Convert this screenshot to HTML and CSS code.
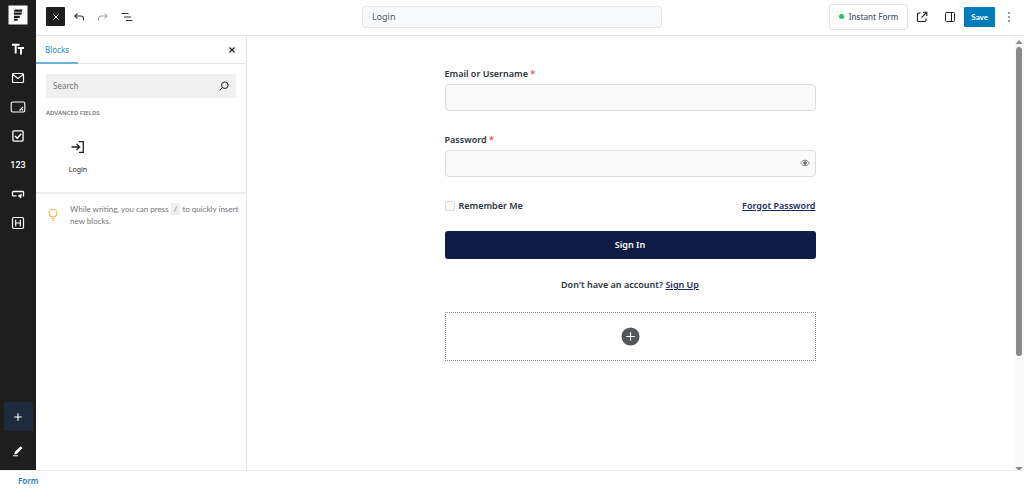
FILE: index.html
```html
<!DOCTYPE html>
<html lang="en">
<head>
<meta charset="utf-8">
<meta name="viewport" content="width=device-width, initial-scale=1">
<title>Login</title>
<link rel="stylesheet" href="styles.css">
</head>
<body>
<div class="editor">
  <nav class="rail" aria-label="Quick blocks">
    <a class="logo" href="#" aria-label="Home"><svg width="20" height="20" viewBox="0 0 20 20"><path fill="#fff" d="M.5.500h19v19H.5z"/><path fill="#1e1e1e" d="M6.600 4.500h7.900l-.7 2.200H6zM6 7.600h8l-.6 2.200H6zM6 10.800h6l-.6 2.100H6zM6 13.700h4l-.6 2.100H6z"/></svg></a>
    <button class="rail-btn" aria-label="Text"><svg width="14" height="14" viewBox="0 0 14 14" fill="none" stroke="#fff" stroke-width="1.900"><path d="M1 2.800h7.500M4.700 2.800V11.500M6.800 6h6.200M10 6v6.500"/></svg></button>
    <button class="rail-btn" aria-label="Email"><svg width="14" height="14" viewBox="0 0 14 14" fill="none" stroke="#fff" stroke-width="1.200"><rect x="1.500" y="2.500" width="11" height="9" rx="1"/><path d="M1.800 3.500 7 7.500l5.200-4"/></svg></button>
    <button class="rail-btn" aria-label="Text area"><svg width="16" height="14" viewBox="0 0 16 14" fill="none" stroke="#fff" stroke-width="1.100"><rect x="1.200" y="2" width="13.600" height="10" rx="1.500"/><path d="m9.500 10.500 3.500-3.500M11.800 10.500 13 9.300"/></svg></button>
    <button class="rail-btn" aria-label="Checkbox"><svg width="14" height="14" viewBox="0 0 14 14" fill="none" stroke="#fff" stroke-width="1.300"><rect x="1.900" y="1.900" width="10.200" height="10.200" rx="1"/><path stroke-width="1.500" d="m4 7 2.200 2.200L10.300 4.800"/></svg></button>
    <button class="rail-btn rail-number" aria-label="Number">123</button>
    <button class="rail-btn" aria-label="Button"><svg width="14" height="14" viewBox="0 0 14 14" fill="none" stroke="#fff" stroke-width="1.300"><path d="M5.500 8.800H2.300a.8.800 0 0 1-.8-.8V5.300a.8.800 0 0 1 .8-.8h9.400a.8.800 0 0 1 .8.800V9.500"/><path fill="#fff" stroke-width=".6" d="m7 8.700 3.500-1.400-.8 3.900-1-1.300z"/></svg></button>
    <button class="rail-btn" aria-label="Heading"><svg width="14" height="14" viewBox="0 0 14 14" fill="none" stroke="#fff" stroke-width="1.200"><rect x="1.500" y="1.500" width="11" height="11" rx="1.200"/><path d="M4.700 3.800v6.400M9.300 3.800v6.400M4.700 7h4.600"/></svg></button>
    <button class="rail-btn rail-add" aria-label="Add block"><svg width="10" height="10" viewBox="0 0 10 10" stroke="#fff" stroke-width="1.100"><path d="M5 1.200v7.600M1.200 5h7.600"/></svg></button>
    <button class="rail-btn rail-edit" aria-label="Edit style"><svg width="12" height="12" viewBox="0 0 12 12"><path fill="#fff" d="M8.600 1.300 10.500 3 5 8.700 2.200 9.400 3 6.800zM1 10.300h5v1H1z"/></svg></button>
  </nav>

  <div class="workspace">
    <header class="topbar">
      <div class="tools">
        <button class="close-editor" aria-label="Close inserter"><svg width="8" height="8" viewBox="0 0 8 8" stroke="#fff" stroke-width="1"><path d="m1.500 1.500 5 5M6.500 1.500l-5 5"/></svg></button>
        <button class="icon-btn" aria-label="Undo"><svg width="12" height="12" viewBox="0 0 12 12" fill="none" stroke="#333" stroke-width="1.100"><path d="M4.500 2.500 1.800 5l2.700 2.700M1.800 5H8q2.500 0 2.500 2.500V9.500"/></svg></button>
        <button class="icon-btn" aria-label="Redo"><svg width="12" height="12" viewBox="0 0 12 12" fill="none" stroke="#999" stroke-width="1"><path d="M7.500 2.500 10.200 5 7.500 7.700M10.200 5H4Q1.500 5 1.500 7.500V9.500"/></svg></button>
        <button class="icon-btn" aria-label="List view"><svg width="12" height="12" viewBox="0 0 12 12" fill="none" stroke="#333" stroke-width="1.100"><path d="M.5 2.500h7M3 6h7M5 9.500h6.500"/></svg></button>
      </div>
      <input class="title-input" type="text" value="Login" aria-label="Form title">
      <div class="actions">
        <button class="instant"><span class="dot"></span>Instant Form</button>
        <button class="icon-btn" aria-label="Open form"><svg width="12" height="12" viewBox="0 0 12 12" fill="none" stroke="#1e1e1e" stroke-width="1.100"><path d="M4.500 2H2.500a1 1 0 0 0-1 1v6.500a1 1 0 0 0 1 1H9a1 1 0 0 0 1-1v-2M7 1.300h3.800v3.800M10.600 1.500 5.500 6.600"/></svg></button>
        <button class="icon-btn settings" aria-label="Settings"><svg width="12" height="12" viewBox="0 0 12 12" fill="none" stroke="#1e1e1e"><rect x="1.500" y="1.500" width="9" height="9" rx="1"/><path d="M7.500 1.500v9"/></svg></button>
        <button class="save">Save</button>
        <button class="icon-btn more" aria-label="Options"><svg width="4" height="12" viewBox="0 0 4 12" fill="#1e1e1e"><circle cx="2" cy="2" r=".8"/><circle cx="2" cy="6" r=".8"/><circle cx="2" cy="10" r=".8"/></svg></button>
      </div>
    </header>

    <div class="body">
      <aside class="panel">
        <div class="tabs">
          <button class="tab">Blocks</button>
          <button class="icon-btn" aria-label="Close panel"><svg width="8" height="8" viewBox="0 0 8 8" stroke="#1e1e1e" stroke-width="1.100"><path d="m1.500 1.500 5 5M6.500 1.500l-5 5"/></svg></button>
        </div>
        <div class="blocks">
          <label class="search">
            <input type="text" placeholder="Search" aria-label="Search">
            <svg width="10" height="10" viewBox="0 0 10 10" fill="none" stroke="#1e1e1e" stroke-width="1"><circle cx="5.800" cy="4.200" r="3.300"/><path d="M3.400 6.600.7 9.300"/></svg>
          </label>
          <h2 class="group-title">ADVANCED FIELDS</h2>
          <button class="block">
            <svg width="14" height="14" viewBox="0 0 14 14" fill="none" stroke="#1e1e1e" stroke-width="1.300"><path d="M.5 7H9M5.500 4 8.700 7 5.500 10M8 1.700h4.300v10.600H8"/></svg>
            Login
          </button>
        </div>
        <div class="tip">
          <svg width="10" height="14" viewBox="0 0 10 14" fill="none" stroke="#f0b849" stroke-width="1.100"><path d="M3.300 8.800C1.800 8 1 6.600 1 5.200a4 4 0 0 1 8 0c0 1.400-.8 2.800-2.300 3.600zM3.300 10.800h3.400M4 12.500h2"/></svg>
          <p>While writing, you can press <kbd>/</kbd> to quickly insert new blocks.</p>
        </div>
      </aside>

      <main class="canvas">
        <form class="form">
          <div class="field">
            <label for="user">Email or Username <span class="req">*</span></label>
            <input id="user" type="text">
          </div>
          <div class="field">
            <label for="pass">Password <span class="req">*</span></label>
            <div class="password">
              <input id="pass" type="password">
              <button class="eye" type="button" aria-label="Show password"><svg width="10" height="8" viewBox="0 0 10 8" fill="none" stroke="#666"><path stroke-width=".8" d="M.6 4Q5-1.800 9.400 4 5 9.800.6 4z"/><circle cx="5" cy="4" r="1.300" fill="#777"/></svg></button>
            </div>
          </div>
          <div class="options">
            <label class="remember"><input type="checkbox">Remember Me</label>
            <a href="#">Forgot Password</a>
          </div>
          <button class="submit" type="button">Sign In</button>
          <p class="signup">Don't have an account? <a href="#">Sign Up</a></p>
          <button class="appender" type="button" aria-label="Add block"><svg width="19" height="19" viewBox="0 0 20 20"><circle cx="10" cy="10" r="9.500" fill="#50575e"/><path stroke="#fff" stroke-width="1.200" d="M10 5.500v9M5.500 10h9"/></svg></button>
        </form>
      </main>
      <div class="scrollbar" aria-hidden="true">
        <svg width="8" height="4" viewBox="0 0 8 4" fill="#8a8a8a"><path d="M4 0l3.500 4h-7z"/></svg>
        <div class="track"><div class="thumb"></div></div>
        <svg width="8" height="3" viewBox="0 0 8 3" fill="#8a8a8a"><path d="M.5 0h7L5 3H3z"/></svg>
      </div>
    </div>
  </div>
</div>
<footer class="breadcrumb"><a href="#">Form</a></footer>
</body>
</html>
```
FILE: styles.css
```css
* { box-sizing: border-box; }
body {
  margin: 0;
  height: 100vh;
  display: flex;
  flex-direction: column;
  background: #fff;
  color: #1e1e1e;
  font: 8px/12px "Noto Sans", sans-serif;
}
button, input { font: inherit; color: inherit; margin: 0; }
button { padding: 0; border: 0; background: none; cursor: pointer; }
svg { display: block; flex: none; }
p, h2 { margin: 0; }

.editor { flex: 1; min-height: 0; display: flex; }
.rail {
  width: 36px;
  flex: none;
  display: flex;
  flex-direction: column;
  align-items: center;
  padding: 5px 0;
  background: #1e1e1e;
}
.logo { margin-bottom: 9px; }
.rail-btn {
  width: 29px;
  height: 29px;
  flex: none;
  display: grid;
  place-items: center;
  color: #fff;
}
.rail-number { font: 500 9px/12px Roboto, sans-serif; }
.rail-add { margin-top: auto; background: #1d2b3c; }
.rail-edit { margin-top: 5px; }

.workspace { flex: 1; min-width: 0; display: flex; flex-direction: column; }
.topbar {
  height: 36px;
  flex: none;
  display: grid;
  grid-template-columns: 9fr 300px 10fr;
  align-items: center;
  padding-bottom: 2px;
  border-bottom: 1px solid #e4e4e4;
}
.tools { display: flex; align-items: center; gap: 4px; padding-left: 10px; }
.close-editor {
  width: 19px;
  height: 19px;
  display: grid;
  place-items: center;
  border-radius: 1px;
  background: #1e1e1e;
}
.icon-btn { width: 20px; height: 20px; display: grid; place-items: center; }
.title-input {
  width: 100%;
  height: 22px;
  padding: 0 9px;
  border: 1px solid #e2e5e9;
  border-radius: 4px;
  background: #f9fafb;
  color: #50575e;
  font-size: 9px;
}
.actions { display: flex; align-items: center; justify-content: flex-end; padding-right: 5px; }
.instant {
  display: flex;
  align-items: center;
  gap: 5px;
  height: 26px;
  margin-right: 4px;
  padding: 0 9px;
  border: 1px solid #e2e5e9;
  border-radius: 3px;
  color: #4b5563;
  font-weight: 500;
}
.dot { width: 5px; height: 5px; border-radius: 50%; background: #22c55e; }
.settings { margin: 0 4px 0 8px; }
.save {
  height: 20px;
  padding: 0 7px;
  border-radius: 1px;
  background: #007cba;
  color: #fff;
  font-family: Lato, sans-serif;
  font-weight: 700;
}
.more { margin-left: 4px; }

.body { flex: 1; min-height: 0; display: flex; }
.panel { width: 211px; flex: none; border-right: 1px solid #e4e4e4; }
.tabs {
  height: 28px;
  display: flex;
  align-items: center;
  justify-content: space-between;
  padding-right: 4px;
  border-bottom: 1px solid #e4e4e4;
}
.tab {
  height: 28px;
  padding: 2px 9px 0;
  border-bottom: 2px solid #6bb3d8;
  color: #2b8fc4;
}
.blocks { padding: 10px 10px 16px; border-bottom: 2px solid #ececec; }
.search {
  display: flex;
  align-items: center;
  height: 24px;
  padding: 0 7px;
  background: #f0f0f0;
}
.search input { flex: 1; min-width: 0; padding: 0; border: 0; outline: 0; background: none; }
.search input::placeholder { color: #757575; }
.group-title {
  margin-top: 9px;
  color: #757575;
  font-size: 6px;
  font-weight: 600;
}
.block {
  width: 64px;
  display: flex;
  flex-direction: column;
  align-items: center;
  gap: 10px;
  padding-top: 21px;
  font-size: 7px;
}
.tip {
  display: flex;
  align-items: center;
  gap: 12px;
  padding: 9px 4px 9px 12px;
  color: #757575;
  font-family: Lato, sans-serif;
}
kbd { display: inline-block; padding: 0 3px; border-radius: 1px; background: #f0f0f0; font: inherit; }

.canvas { flex: 1; min-width: 0; padding: 31px 17px 31px 16px; overflow: hidden; }
.form {
  max-width: 371px;
  margin: 0 auto;
  display: flex;
  flex-direction: column;
  color: #2c3338;
  font-size: 9px;
  font-weight: 600;
  line-height: 14px;
}
.form a { color: #1f2b5c; text-decoration: underline; }
.field { margin-bottom: 22px; }
.field label { display: block; margin-bottom: 3px; }
.req { color: #e5484d; }
.field input {
  display: block;
  width: 100%;
  height: 27px;
  padding: 0 8px;
  border: 1px solid #dcdcde;
  border-radius: 4px;
  background: #fafafa;
}
.password { position: relative; }
.eye { position: absolute; right: 6px; top: 9px; }
.options { display: flex; align-items: center; justify-content: space-between; margin-bottom: 18px; }
.remember { display: flex; align-items: center; gap: 4px; }
.remember input {
  appearance: none;
  width: 10px;
  height: 10px;
  border: 1px solid #dcdcde;
  border-radius: 2px;
  background: #fafafa;
}
.submit { height: 28px; border-radius: 3px; background: #111c44; color: #fff; }
.signup { margin: 19px 0 20px; text-align: center; }
.appender {
  height: 49px;
  display: grid;
  place-items: center;
  border: 1px dotted #909090;
}
.scrollbar {
  width: 10px;
  flex: none;
  display: flex;
  flex-direction: column;
  align-items: center;
  gap: 3px;
  padding-top: 4px;
  background: #fafafa;
}
.track { flex: 1; width: 6px; }
.thumb { height: 74%; border-radius: 3px; background: #8a8a8a; }

.breadcrumb {
  height: 18px;
  flex: none;
  display: flex;
  align-items: center;
  padding: 2px 18px 0;
  border-top: 1px solid #eee;
}
.breadcrumb a { color: #1a7fb5; font-weight: 600; text-decoration: none; }
```
